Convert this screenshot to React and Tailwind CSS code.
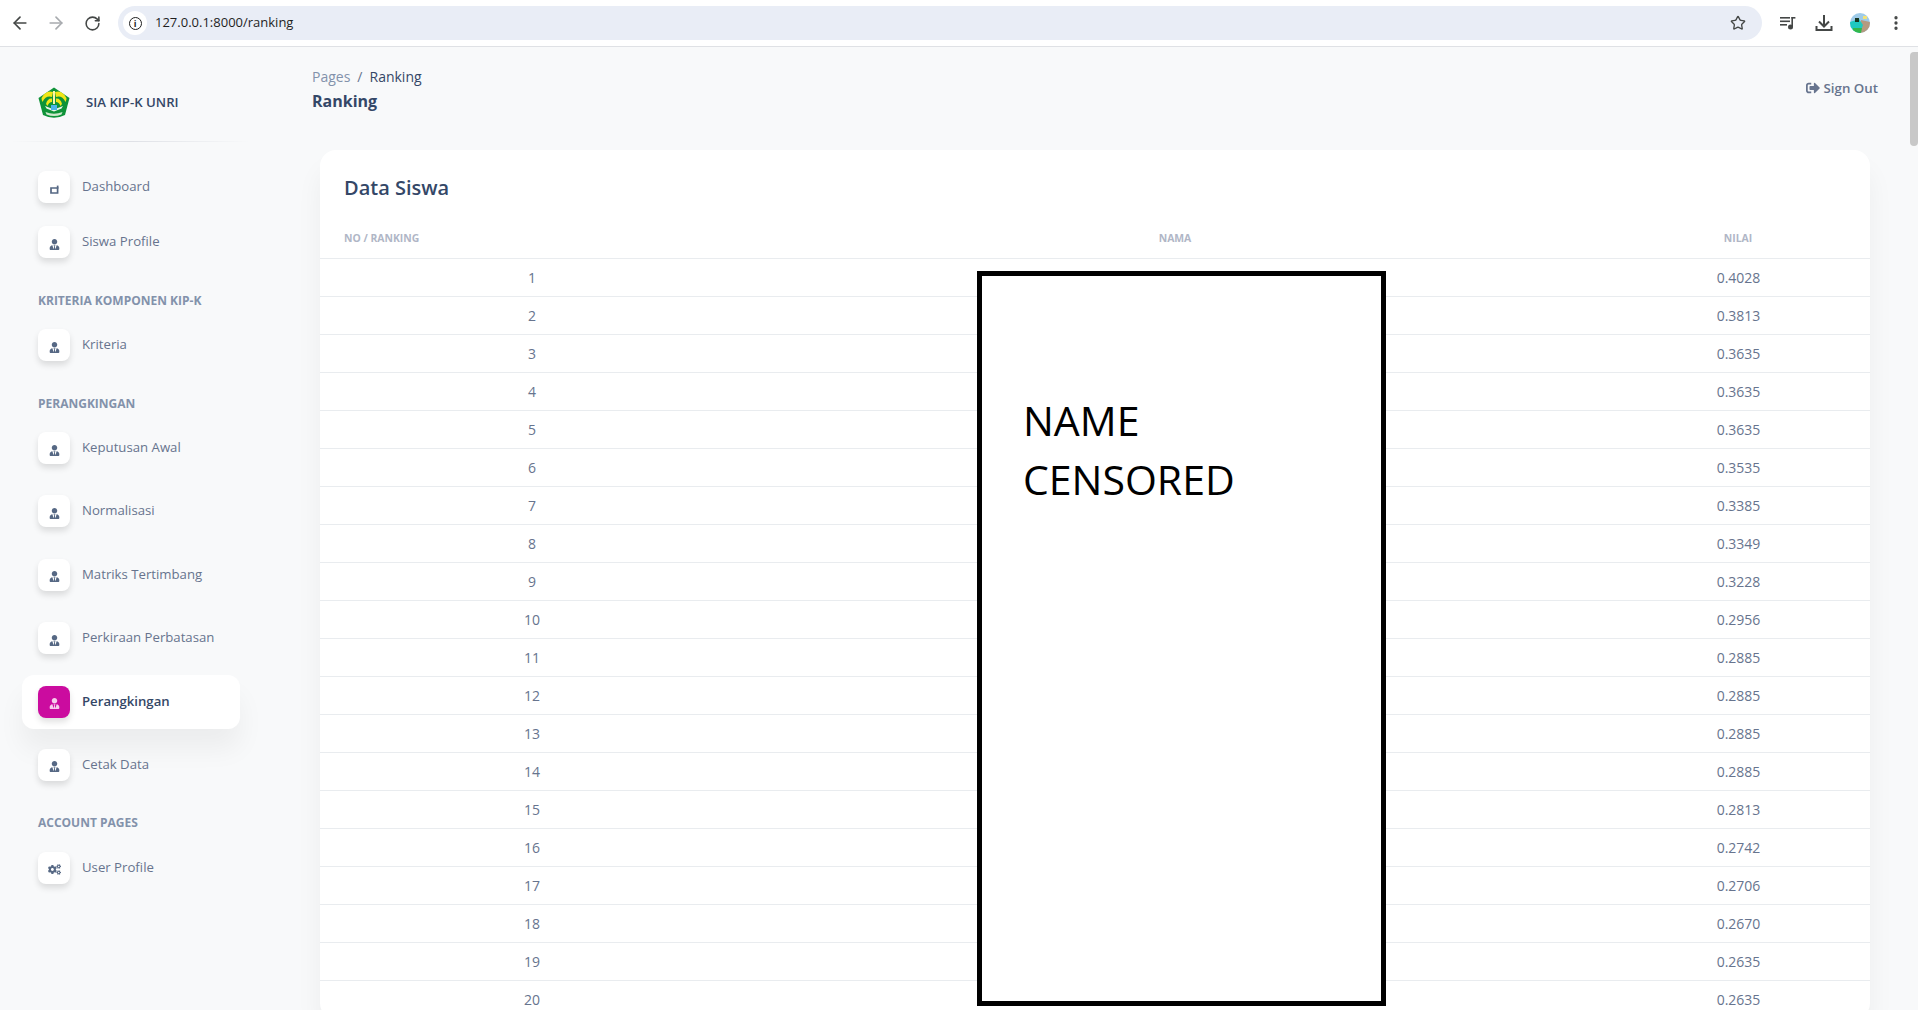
import { ArrowLeft, ArrowRight, RotateCw, Star, EllipsisVertical } from "lucide-react";
import { FaUserTie, FaCogs, FaSignOutAlt } from "react-icons/fa";

const scores = [
    "0.4028", "0.3813", "0.3635", "0.3635", "0.3635", "0.3535", "0.3385", "0.3349", "0.3228", "0.2956",
    "0.2885", "0.2885", "0.2885", "0.2885", "0.2813", "0.2742", "0.2706", "0.2670", "0.2635", "0.2635",
];

function Logo() {
    return (
        <svg width="32" height="32" viewBox="0 0 32 32">
            <path d="M16 0.5 L31.5 11 L27 28 Q16 33.5 5 28 L0.5 11 Z" fill="#0f9338" />
            <path d="M15 5 Q8 2.5 3.5 11 Q3.5 13 4.5 15 Q8 8 14 10 Z" fill="#f2e616" />
            <path d="M17 5 Q24 2.5 28.5 11 Q28.5 13 27.5 15 Q24 8 18 10 Z" fill="#f2e616" />
            <path d="M14 11.5 Q9.5 11 8 17 L9.5 19 Q11 15 14 15 Z" fill="#f2e616" />
            <path d="M18 11.5 Q22.5 11 24 17 L22.5 19 Q21 15 18 15 Z" fill="#f2e616" />
            <rect x="15" y="4" width="2" height="13" fill="#fbf6a8" />
            <path d="M7 19 L16 22.5 L25 19 L23.5 21.5 L16 24.5 L8.5 21.5 Z" fill="#eef6ee" />
            <rect x="13" y="18" width="6" height="5" fill="#4db4ea" />
            <path d="M7.5 25 Q16 28.5 24.5 25 L23.5 27.5 Q16 30.5 8.5 27.5 Z" fill="#cfe8cc" />
        </svg>
    );
}

function Avatar() {
    return (
        <svg width="20" height="20" viewBox="0 0 20 20">
            <clipPath id="avatar-clip"><circle cx="10" cy="10" r="10" /></clipPath>
            <g clipPath="url(#avatar-clip)">
                <rect width="20" height="20" fill="#9fcbe8" />
                <path d="M11 7 L20 9 L20 20 L10 20 Z" fill="#b49a80" />
                <path d="M0 9 L9 6 L13 12 L10 20 L0 20 Z" fill="#1fc9c0" />
                <path d="M3 15 L12 15 L11 20 L3 20 Z" fill="#34b84a" />
                <rect x="5" y="5" width="4" height="4" fill="#17361f" />
                <rect x="13" y="3" width="4" height="3" fill="#f2e27a" />
            </g>
        </svg>
    );
}

function QueueIcon() {
    return (
        <svg width="16" height="14" viewBox="0 0 16 14" fill="#444746">
            <rect x="0" y="1" width="10" height="1.6" />
            <rect x="0" y="4.5" width="10" height="1.6" />
            <rect x="0" y="8" width="7" height="1.6" />
            <rect x="11.4" y="1" width="1.6" height="10" />
            <rect x="11.4" y="1" width="4" height="1.6" />
            <circle cx="10.5" cy="11" r="2.5" />
        </svg>
    );
}

function DownloadIcon() {
    return (
        <svg width="18" height="18" viewBox="0 0 18 18" fill="none" stroke="#444746" strokeWidth="2">
            <path d="M9 1 V11.5" />
            <path d="M4 7.5 L9 12.5 L14 7.5" />
            <path d="M1.5 12 V16 H16.5 V12" />
        </svg>
    );
}

function DashIcon() {
    return (
        <svg width="9" height="9" viewBox="0 0 9 9" className="mt-[5px]">
            <path d="M1 3 H7.6 V8 H1 Z" fill="none" stroke="#566884" strokeWidth="1.7" />
            <rect x="6.8" y="0.6" width="1.7" height="3" fill="#566884" />
        </svg>
    );
}

function NavItem({ label, icon = "user", active = false }) {
    return (
        <div className={`flex h-[54px] items-center rounded-xl px-4 ${active ? "bg-white shadow-[0_20px_27px_0_rgba(0,0,0,0.05)]" : ""}`}>
            <div className={`mr-3 flex h-8 w-8 items-center justify-center rounded-lg shadow-[0_4px_6px_rgba(0,0,0,0.12)] ${active ? "bg-[#cb0c9f] text-[#f6cdec]" : "bg-white text-[#566884]"}`}>
                {icon === "dash" && <DashIcon />}
                {icon === "user" && <FaUserTie className="mt-1 text-[11px]" />}
                {icon === "cogs" && <FaCogs className="mt-1 text-[13px]" />}
            </div>
            <span className={`text-[13.2px] ${active ? "font-semibold text-[#344767]" : "text-[#67748e]"}`}>{label}</span>
        </div>
    );
}

function NavHeading({ children, spacing = "mt-[23px] mb-[8px]" }) {
    return <h6 className={`${spacing} ml-4 text-xs leading-[18px] font-bold text-[#8392ab]`}>{children}</h6>;
}

export default function App() {
    return (
        <div className="relative h-[1010px] overflow-hidden bg-[#f8f9fa] font-['Open_Sans',sans-serif]">
            {/* browser bar */}
            <div className="flex h-[47px] items-center border-b border-[#dfe1e5] bg-white pr-[13px] pl-[10px]">
                <ArrowLeft size={20} strokeWidth={2} className="text-[#444746]" />
                <ArrowRight size={20} strokeWidth={2} className="ml-[16px] text-[#a8abaf]" />
                <RotateCw size={17} strokeWidth={2.2} className="ml-[18px] text-[#444746]" />
                <div className="ml-[17px] flex h-[34px] flex-1 items-center rounded-full bg-[#e9edf6] pr-[16px] pl-[5px]">
                    <div className="flex h-6 w-6 items-center justify-center rounded-full bg-white">
                        <span className="flex h-[13px] w-[13px] items-center justify-center rounded-full border-[1.5px] border-[#1f1f1f] text-[9px] leading-none font-bold text-[#1f1f1f]">i</span>
                    </div>
                    <span className="ml-[8px] flex-1 text-[13px] text-[#1f1f1f]">127.0.0.1:8000/ranking</span>
                    <Star size={16} strokeWidth={2} className="text-[#444746]" />
                </div>
                <div className="ml-[18px] flex w-[16px] justify-center"><QueueIcon /></div>
                <div className="ml-[19px]"><DownloadIcon /></div>
                <div className="ml-[17px]"><Avatar /></div>
                <EllipsisVertical size={18} strokeWidth={2.4} className="ml-[17px] text-[#444746]" />
            </div>

            <div className="flex">
                {/* sidebar */}
                <aside className="w-[296px] shrink-0 pt-10">
                    <div className="flex h-8 items-center pl-[38px]">
                        <Logo />
                        <span className="ml-4 text-[13.2px] font-semibold text-[#344767]">SIA KIP-K UNRI</span>
                    </div>
                    <div className="mt-[22px] ml-[10px] h-px w-[240px] bg-gradient-to-r from-transparent via-[#dfe1e6] to-transparent" />
                    <nav className="mt-[18px] mr-[56px] ml-[22px]">
                        <div className="flex flex-col gap-px">
                            <NavItem label="Dashboard" icon="dash" />
                            <NavItem label="Siswa Profile" />
                        </div>
                        <NavHeading>KRITERIA KOMPONEN KIP-K</NavHeading>
                        <NavItem label="Kriteria" />
                        <NavHeading>PERANGKINGAN</NavHeading>
                        <div className="flex flex-col gap-[9.4px]">
                            <NavItem label="Keputusan Awal" />
                            <NavItem label="Normalisasi" />
                            <NavItem label="Matriks Tertimbang" />
                            <NavItem label="Perkiraan Perbatasan" />
                            <NavItem label="Perangkingan" active />
                            <NavItem label="Cetak Data" />
                        </div>
                        <NavHeading spacing="mt-[22px] mb-[9px]">ACCOUNT PAGES</NavHeading>
                        <NavItem label="User Profile" icon="cogs" />
                    </nav>
                </aside>

                {/* main */}
                <main className="min-w-0 flex-1">
                    <div className="flex h-[103px] items-start justify-between pt-[18px] pr-10 pl-4">
                        <div>
                            <div className="text-sm leading-6 text-[#344767]">
                                <span className="text-[#8392ab]">Pages</span>
                                <span className="mx-[7px] text-[#67748e]">/</span>
                                Ranking
                            </div>
                            <div className="text-base leading-6 font-bold text-[#344767]">Ranking</div>
                        </div>
                        <div className="mt-[13px] flex items-center gap-1 text-[13.3px] leading-5 font-semibold text-[#67748e]">
                            <FaSignOutAlt className="text-[14px]" />
                            Sign Out
                        </div>
                    </div>

                    <div className="relative mr-12 ml-6 rounded-2xl bg-white shadow-[0_20px_27px_0_rgba(0,0,0,0.05)]">
                        <h6 className="px-6 pt-6 pb-4 text-xl leading-7 font-semibold text-[#344767]">Data Siswa</h6>
                        <table className="w-full table-fixed border-separate border-spacing-0">
                            <colgroup>
                                <col className="w-[424px]" />
                                <col />
                                <col className="w-[264px]" />
                            </colgroup>
                            <thead>
                                <tr className="text-[10.4px] font-bold text-[#b0b6c6]">
                                    <th className="h-[41px] border-b border-[#e9ecef] px-6 pt-[2px] text-left">NO / RANKING</th>
                                    <th className="h-[41px] border-b border-[#e9ecef] pt-[2px] text-center">NAMA</th>
                                    <th className="h-[41px] border-b border-[#e9ecef] pt-[2px] text-center">NILAI</th>
                                </tr>
                            </thead>
                            <tbody>
                                {scores.map((score, i) => (
                                    <tr key={i} className="text-sm text-[#67748e]">
                                        <td className="h-[38px] border-b border-[#e9ecef] text-center">{i + 1}</td>
                                        <td className="h-[38px] border-b border-[#e9ecef]"></td>
                                        <td className="h-[38px] border-b border-[#e9ecef] pl-px text-center">{score}</td>
                                    </tr>
                                ))}
                            </tbody>
                        </table>

                        {/* censor box pasted over the names */}
                        <div className="absolute top-[121px] left-[657px] h-[735px] w-[409px] border-[5px] border-black bg-white pt-[115px] pl-[41px] text-[41px] leading-[59px] text-black">
                            NAME
                            <br />
                            CENSORED
                        </div>
                    </div>
                </main>
            </div>

            {/* scrollbar */}
            <div className="absolute top-[52px] right-0 h-[94px] w-2 rounded-tl-md rounded-b-md bg-[#c8c8c8]" />
        </div>
    );
}
